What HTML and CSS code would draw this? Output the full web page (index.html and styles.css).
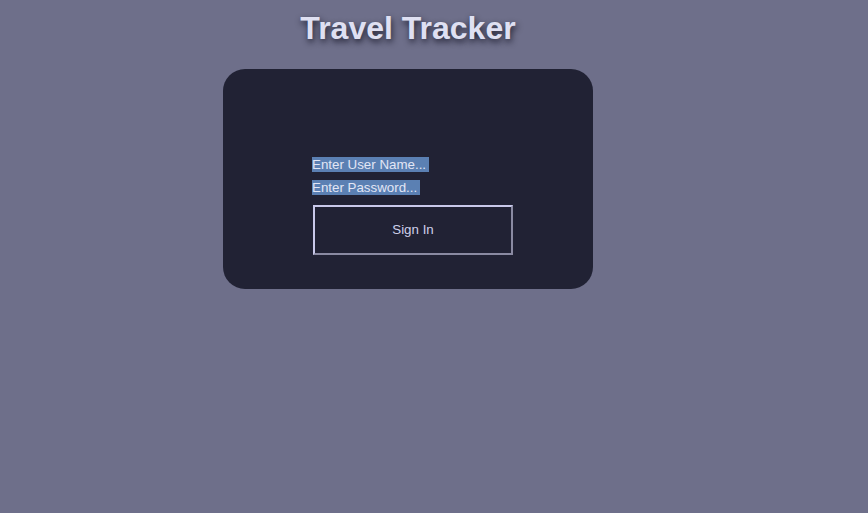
FILE: index.html
```html
<!DOCTYPE html>
<html>
<head>
<meta charset="utf-8">
<link rel="stylesheet" href="styles.css">
</head>
<body>
<div class="page">
  <h1 class="title">Travel Tracker</h1>
  <div class="card">
    <form class="form">
      <span class="field">Enter User Name...</span>
      <span class="field">Enter Password...</span>
      <button type="button" class="btn">Sign In</button>
    </form>
  </div>
</div>
</body>
</html>
```
FILE: styles.css
```css
html, body {
  margin: 0;
  padding: 0;
  background: #6e6f8a;
  font-family: "Liberation Sans", Arial, sans-serif;
}
.page {
  width: 370px;
  margin-left: 223px;
  padding-top: 10px;
  display: flex;
  flex-direction: column;
  align-items: center;
}
.title {
  margin: 0;
  font-size: 32px;
  line-height: 37px;
  font-weight: bold;
  color: #dfe0f2;
  text-shadow: 1px 3px 6px rgba(10, 10, 25, 0.8);
}
.card {
  margin-top: 22px;
  width: 370px;
  height: 220px;
  box-sizing: border-box;
  background: #212234;
  border-radius: 22px;
  padding: 88px 0 0 89px;
}
.form {
  display: flex;
  flex-direction: column;
  align-items: flex-start;
  gap: 8px;
}
.field {
  background: #5b80b3;
  color: #e2e6f5;
  font-size: 13.33px;
  line-height: 15px;
  padding-right: 3px;
}
.btn {
  margin-top: 2px;
  margin-left: 1px;
  width: 200px;
  height: 50px;
  background: transparent;
  border-style: solid;
  border-width: 2px;
  border-top-color: #c8c8ea;
  border-left-color: #c8c8ea;
  border-right-color: #8a8aa2;
  border-bottom-color: #8a8aa2;
  color: #cfd0ea;
  font-family: "Liberation Sans", Arial, sans-serif;
  font-size: 13.33px;
  line-height: 15px;
  padding: 0 0 2px 0;
}
```
